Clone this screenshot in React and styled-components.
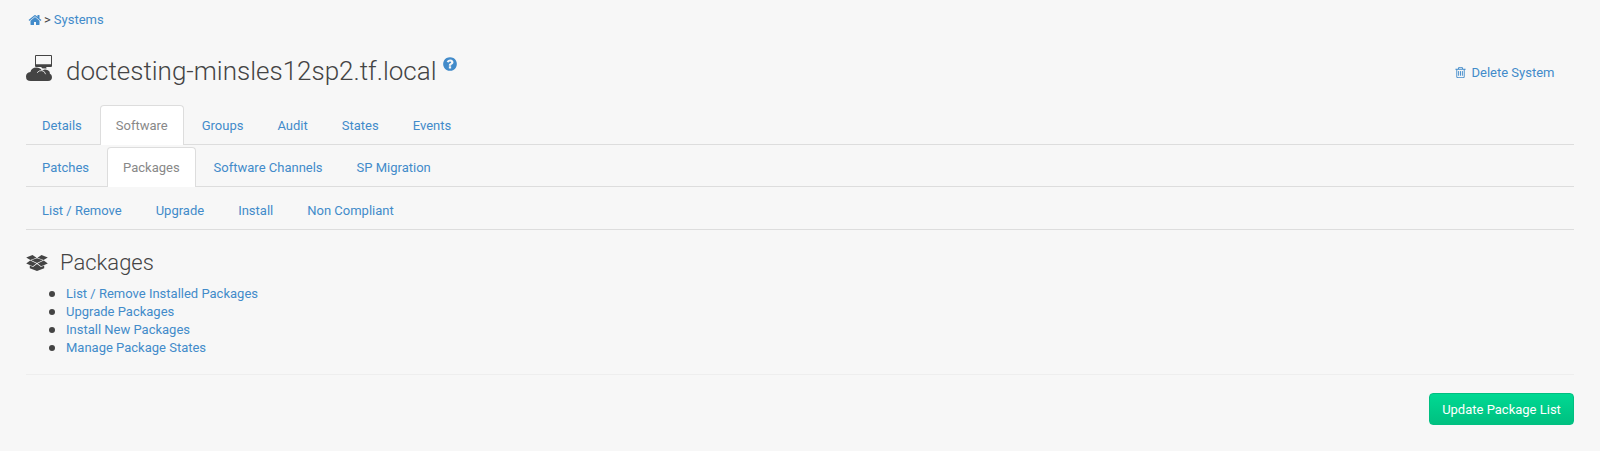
import React from "react";
import styled, { createGlobalStyle, css } from "styled-components";

const GlobalStyle = createGlobalStyle`
  * { box-sizing: border-box; }
  body {
    margin: 0;
    background: #f7f7f7;
    color: #444;
    font: 13px/18px Roboto, "Liberation Sans", sans-serif;
  }
`;

const Page = styled.main`
  height: 451px;
  padding: 10px 26px 0;
  display: flex;
  flex-direction: column;
`;

const Link = styled.a`
  color: #428bca;
  text-decoration: none;
`;

const Breadcrumb = styled.nav`
  display: flex;
  align-items: center;
  gap: 2px;
  height: 20px;
  padding-left: 2px;
`;

const Icon = styled.svg`
  display: block;
  flex: none;
  width: ${(p) => p.$width}px;
  height: ${(p) => p.$height}px;
  fill: currentColor;
`;

const Separator = styled.span`
  font-size: 13px;
  margin-right: 1px;
`;

const Header = styled.header`
  display: flex;
  align-items: flex-start;
  height: 75px;
  padding-top: 24px;
`;

const SystemIcon = styled.svg`
  display: block;
  width: 26px;
  height: 26px;
  margin: 1px 14px 0 0;
  fill: #444;
`;

const Title = styled.h1`
  margin: 0;
  font-size: 26px;
  font-weight: 300;
  line-height: 34px;
`;

const HelpLink = styled(Link)`
  margin: 2px 0 0 5px;
`;

const DeleteLink = styled(Link)`
  display: flex;
  align-items: center;
  gap: 5px;
  height: 18px;
  margin: 10px 19.5px 0 auto;
  svg {
    margin-bottom: 1px;
  }
`;

const TabBar = styled.nav`
  display: flex;
  gap: 2px;
  height: 40px;
  margin-bottom: ${(p) => p.$gap}px;
  border-bottom: 1px solid #ddd;
`;

const Tab = styled(Link)`
  height: 40px;
  padding: 11px 15px 0;
  border: 1px solid transparent;
  border-bottom: 0;
  border-radius: 4px 4px 0 0;
  ${(p) =>
    p.$active &&
    css`
      color: #888;
      background: #fff;
      border-color: #ddd;
    `}
`;

const SectionHeading = styled.h2`
  display: flex;
  align-items: center;
  gap: 12px;
  height: 30px;
  margin: 18px 0 7px;
  font-size: 22px;
  font-weight: 300;
`;

const LinkList = styled.ul`
  margin: 0;
  padding-left: 23px;
  list-style: none;
`;

const LinkItem = styled.li`
  display: flex;
  align-items: center;
  gap: 11px;
  &::before {
    content: "";
    width: 6px;
    height: 6px;
    border-radius: 50%;
    background: #444;
  }
`;

const Divider = styled.hr`
  width: 100%;
  height: 1px;
  margin: 17px 0 18px;
  border: 0;
  background: #eee;
`;

const PrimaryButton = styled.button`
  align-self: flex-end;
  width: 145px;
  height: 32px;
  padding: 1px 0 0;
  border: 1px solid #00bf81;
  border-radius: 4px;
  background: linear-gradient(#00d993, #00c080);
  color: #fff;
  font: inherit;
`;

const HOME =
  "M1472 992v480q0 26-19 45t-45 19h-384v-384h-256v384h-384q-26 0-45-19t-19-45v-480q0-1 .5-3t.5-3l575-474 575 474q1 2 1 6zm223-69l-62 74q-8 9-21 11h-3q-13 0-21-7l-692-577-692 577q-12 8-24 7-13-2-21-11l-62-74q-8-10-7-23.5t11-21.5l719-599q32-26 76-26t76 26l244 204v-195q0-14 9-23t23-9h192q14 0 23 9t9 23v408l219 182q10 8 11 21.5t-7 23.5z";
const HELP =
  "M1024 1376v-192q0-14-9-23t-23-9h-192q-14 0-23 9t-9 23v192q0 14 9 23t23 9h192q14 0 23-9t9-23zm256-672q0-88-55.5-163t-138.5-116-170-41q-243 0-371 213-15 24 8 42l132 100q7 6 19 6 16 0 25-12 53-68 86-92 34-24 86-24 48 0 85.5 26t37.5 59q0 38-20 61t-68 45q-63 28-115.5 86.5t-52.5 125.5v36q0 14 9 23t23 9h192q14 0 23-9t9-23q0-19 21.5-49.5t54.5-49.5q32-18 49-28.5t46-35 44.5-48 28-60.5 12.5-81zm384 192q0 209-103 385.5t-279.5 279.5-385.5 103-385.5-103-279.5-279.5-103-385.5 103-385.5 279.5-279.5 385.5-103 385.5 103 279.5 279.5 103 385.5z";
const TRASH =
  "M704 736v576q0 14-9 23t-23 9h-64q-14 0-23-9t-9-23v-576q0-14 9-23t23-9h64q14 0 23 9t9 23zm256 0v576q0 14-9 23t-23 9h-64q-14 0-23-9t-9-23v-576q0-14 9-23t23-9h64q14 0 23 9t9 23zm256 0v576q0 14-9 23t-23 9h-64q-14 0-23-9t-9-23v-576q0-14 9-23t23-9h64q14 0 23 9t9 23zm128 724v-948h-896v948q0 22 7 40.5t14.5 27 10.5 8.5h832q3 0 10.5-8.5t14.5-27 7-40.5zm-672-1076h448l-48-117q-7-9-17-11h-317q-10 2-17 11zm928 32v64q0 14-9 23t-23 9h-96v948q0 83-47 143.5t-113 60.5h-832q-66 0-113-58.5t-47-141.5v-952h-96q-14 0-23-9t-9-23v-64q0-14 9-23t23-9h309l70-167q15-37 54-63t79-26h320q40 0 79 26t54 63l70 167h309q14 0 23 9t9 23z";
const BOX =
  "M0.2 2.5L6.5 0L10.5 2.7L4.4 4.9ZM21.8 2.5L15.5 0L11.5 2.7L17.6 4.9ZM11 3.2L16.8 5.2L11 7.9L5.2 5.2ZM4.2 5.6L10.4 8.4L6.8 11.2L0.2 8.5ZM17.8 5.6L11.6 8.4L15.2 11.2L21.8 8.5ZM3.8 10.6L7 12L11 9L15 12L18.2 10.6V13.3L11 16L3.8 13.3Z";

function Glyph({ path, width = 14, height = width, viewBox = "0 0 1792 1792" }) {
  return (
    <Icon $width={width} $height={height} viewBox={viewBox} aria-hidden="true">
      <path d={path} />
    </Icon>
  );
}

function Tabs({ items, active, gap }) {
  return (
    <TabBar $gap={gap}>
      {items.map((item) => (
        <Tab key={item} $active={item === active}>
          {item}
        </Tab>
      ))}
    </TabBar>
  );
}

export default function App() {
  return (
    <>
      <GlobalStyle />
      <Page>
        <Breadcrumb>
          <Link>
            <Glyph path={HOME} />
          </Link>
          <Separator>&gt;</Separator>
          <Link>Systems</Link>
        </Breadcrumb>
        <Header>
          <SystemIcon viewBox="0 0 26 26" aria-hidden="true">
            <path
              fillRule="evenodd"
              d="M10 0H25Q26 0 26 1V11Q26 12 25 12H20.2L20.6 13.6H16.6L15 12H10Q9 12 9 11V1Q9 0 10 0ZM10 1V9.3H25V1Z"
            />
            <path d="M4.8 26Q0 26 0 21.4Q0 17.6 4.4 17Q5.4 12.4 10.4 12.4Q14 12.4 15.6 15.2Q19 13.8 21.4 14.9Q24.2 16 23.8 18.6Q26 19.6 26 22.1Q26 26 22 26Z" />
            <path
              fill="none"
              stroke="#f7f7f7"
              strokeWidth="0.8"
              d="M11 17.8Q13 15.2 15.8 15.6Q18.8 16 19.6 19.2M15.8 15.4L18.2 13.8"
            />
          </SystemIcon>
          <Title>doctesting-minsles12sp2.tf.local</Title>
          <HelpLink>
            <Glyph path={HELP} width={16} />
          </HelpLink>
          <DeleteLink>
            <Glyph path={TRASH} width={13} />
            Delete System
          </DeleteLink>
        </Header>
        <Tabs
          items={["Details", "Software", "Groups", "Audit", "States", "Events"]}
          active="Software"
          gap={2}
        />
        <Tabs
          items={["Patches", "Packages", "Software Channels", "SP Migration"]}
          active="Packages"
          gap={3}
        />
        <Tabs items={["List / Remove", "Upgrade", "Install", "Non Compliant"]} gap={0} />
        <SectionHeading>
          <Glyph path={BOX} width={22} height={16} viewBox="0 0 22 16" />
          Packages
        </SectionHeading>
        <LinkList>
          {[
            "List / Remove Installed Packages",
            "Upgrade Packages",
            "Install New Packages",
            "Manage Package States",
          ].map((label) => (
            <LinkItem key={label}>
              <Link>{label}</Link>
            </LinkItem>
          ))}
        </LinkList>
        <Divider />
        <PrimaryButton>Update Package List</PrimaryButton>
      </Page>
    </>
  );
}
